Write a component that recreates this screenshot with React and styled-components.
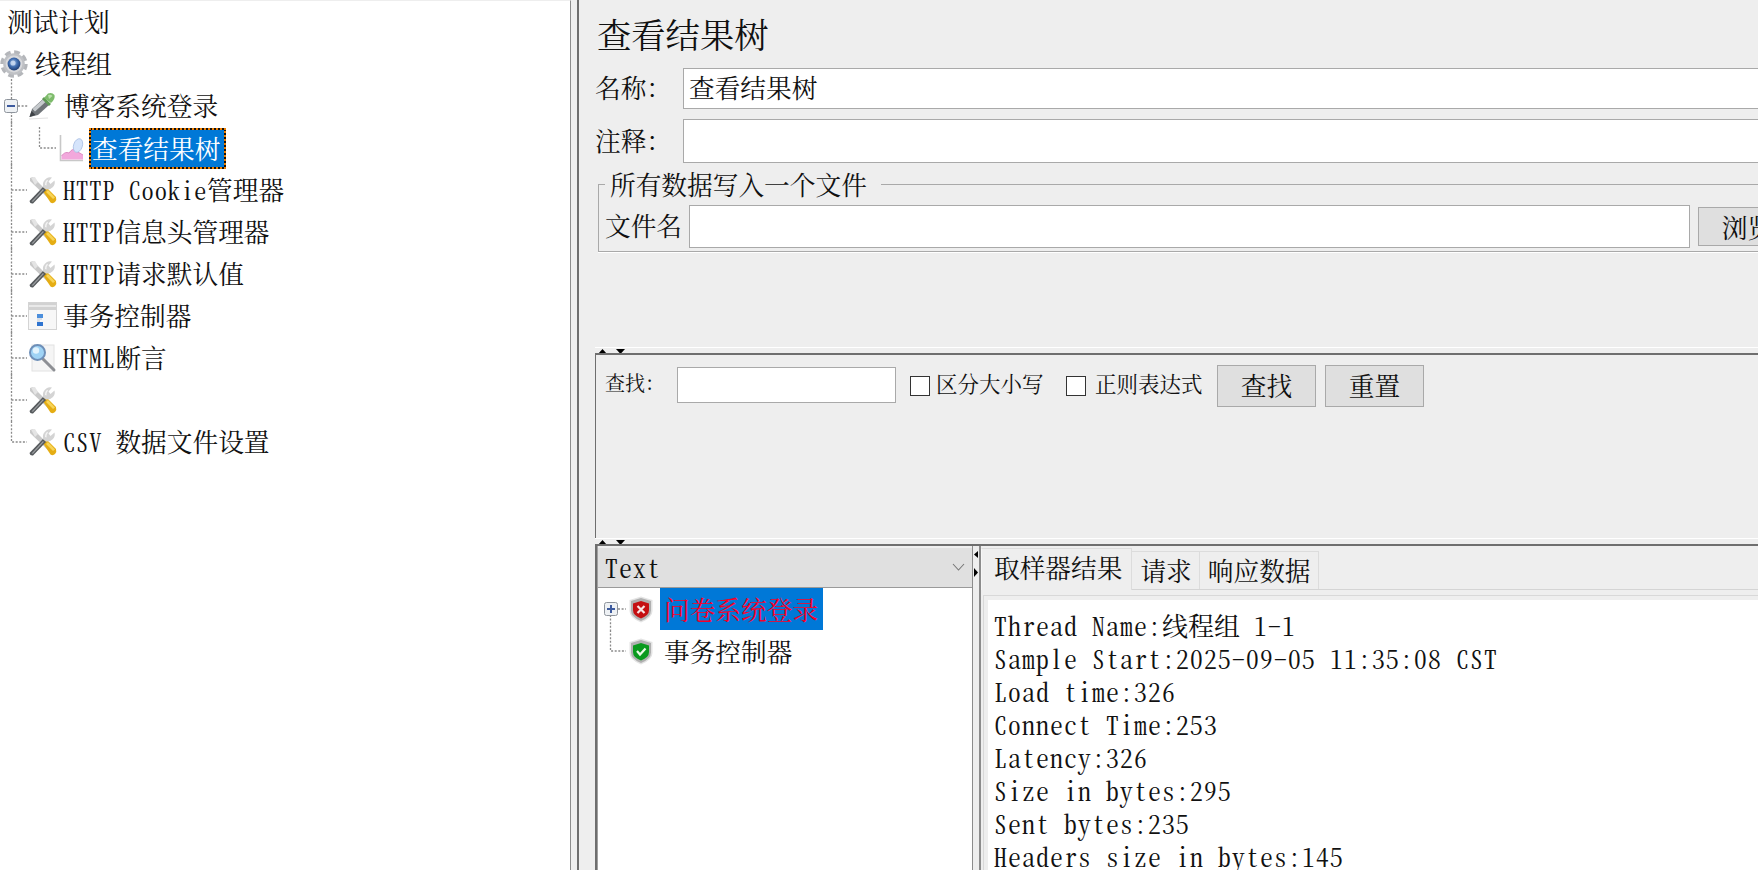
import React from "react";
import styled, { createGlobalStyle } from "styled-components";

const CJK = `"Noto Serif CJK SC", "Noto Sans CJK SC", "Liberation Serif", serif`;

const GlobalStyle = createGlobalStyle`
  html, body {
    margin: 0;
    height: 100%;
    overflow: hidden;
    background: #eeeeee;
  }
  #root { height: 100%; }
  * { box-sizing: border-box; }
`;

const Window = styled.div`
  display: flex;
  width: 1758px;
  height: 870px;
  overflow: hidden;
  font-family: ${CJK};
  color: #111;
`;

/* ---------- left tree ---------- */

const TreePane = styled.div`
  width: 571px;
  flex-shrink: 0;
  background: #fff;
  border-top: 1px solid #eeeeee;
  border-right: 1px solid #8c8c8c;
  font-size: 25.7px;
`;

const TreeRow = styled.div`
  display: flex;
  align-items: center;
  height: 42px;
  white-space: pre;
`;

/* half-width latin glyphs, the tree and result text is fixed pitch */
const Latin = styled.span`
  font-size: 24.5px;
  letter-spacing: 0.85px;
  font-feature-settings: "hwid";
`;

const TreeLabel = styled.span`
  margin-left: ${(p) => p.$gap ?? 6}px;
  margin-bottom: 2px;
  line-height: 1;
`;

const SelectedLabel = styled.span`
  display: flex;
  align-items: center;
  height: 41px;
  margin-left: 5px;
  padding: 0 4px 2px 1px;
  color: #fff;
  border: 2px dotted #f08000;
  background: linear-gradient(#0078d7, #0078d7) padding-box, #111 border-box;
`;

const Guide = styled.svg`
  flex-shrink: 0;
  overflow: visible;
  display: block;
`;

const Icon = styled.svg`
  flex-shrink: 0;
  display: block;
`;

const Gutter = styled.div`
  width: 6px;
  flex-shrink: 0;
  background: #eeeeee;
`;

/* ---------- right side ---------- */

const MainPane = styled.div`
  flex: 1;
  min-width: 0;
  overflow: hidden;
  background: #eeeeee;
  border-left: 2px solid #6e6e6e;
  display: flex;
  flex-direction: column;
`;

const Header = styled.div`
  height: 347px;
  flex-shrink: 0;
  width: 1400px;
  padding-left: 16px;
`;

const Title = styled.div`
  height: 68px;
  padding-left: 2px;
  font-size: 34.3px;
  line-height: 68px;
  white-space: nowrap;
`;

const FieldRow = styled.div`
  display: flex;
  align-items: center;
  height: ${(p) => p.$h}px;
  margin-bottom: ${(p) => p.$mb || 0}px;
`;

const FieldLabel = styled.label`
  width: ${(p) => p.$w}px;
  flex-shrink: 0;
  padding-bottom: 4px;
  font-size: ${(p) => p.$size || 25.7}px;
  white-space: nowrap;
`;

const TextBox = styled.div`
  flex: ${(p) => (p.$w ? "none" : 1)};
  width: ${(p) => (p.$w ? `${p.$w}px` : "auto")};
  height: ${(p) => (p.$h ? `${p.$h}px` : "100%")};
  margin-top: ${(p) => p.$mt || 0}px;
  display: flex;
  align-items: center;
  padding: 0 0 4px 5px;
  background: #fff;
  border: 1px solid #a9a9a9;
  font-size: 25.7px;
  white-space: nowrap;
`;

const FileGroup = styled.fieldset`
  margin: 8px 0 0 3px;
  padding: 8px 0 3px 6px;
  border: 1px solid #a9a9a9;
  border-right: 0;
  box-shadow: 0 1px 0 #fff;
  min-width: 0;
`;

const GroupTitle = styled.legend`
  margin-left: 0;
  padding: 0 14px 0 5px;
  font-size: 25.7px;
  line-height: 26px;
  white-space: nowrap;
`;

const Button = styled.button`
  flex-shrink: 0;
  width: 99px;
  height: ${(p) => p.$h || 42}px;
  margin: ${(p) => p.$m || 0};
  padding: 0 0 4px;
  background: #dfdfdf;
  border: 1px solid #a9a9a9;
  font-family: ${CJK};
  font-size: 25.7px;
  color: #111;
`;

const Splitter = styled.div`
  height: 6px;
  flex-shrink: 0;
  margin-left: 16px;
  border-top: 1px solid #fff;
  padding: 1px 0 0 3px;
  display: flex;
  gap: 9px;
`;

const SearchPanel = styled.div`
  height: 185px;
  flex-shrink: 0;
  margin-left: 16px;
  border-top: 2px solid #6e6e6e;
  border-left: 1px solid #6e6e6e;
  padding: 10px 0 0 9px;
`;

const SearchRow = styled.div`
  display: flex;
  align-items: center;
  height: 38px;
  white-space: nowrap;
`;

const Check = styled.span`
  width: 20px;
  height: 20px;
  flex-shrink: 0;
  margin: 4px 0 0 ${(p) => p.$ml}px;
  background: #fff;
  border: 1px solid #333;
`;

const CheckLabel = styled.span`
  margin: 0 ${(p) => p.$mr || 0}px 4px ${(p) => p.$ml}px;
  font-size: 21.5px;
  width: 105px;
  flex-shrink: 0;
`;

const Results = styled.div`
  flex: 1;
  min-height: 0;
  margin-left: 16px;
  display: flex;
  border-top: 2px solid #6e6e6e;
  border-left: 2px solid #6e6e6e;
`;

const SampleColumn = styled.div`
  width: 376px;
  flex-shrink: 0;
  padding-top: 2px;
  border-left: 1px solid #a0a0a0;
  border-right: 1px solid #8c8c8c;
  display: flex;
  flex-direction: column;
`;

const Combo = styled.div`
  height: 40px;
  flex-shrink: 0;
  display: flex;
  align-items: center;
  justify-content: space-between;
  padding: 0 7px 2px 7px;
  background: #e0e0e0;
  border-bottom: 1px solid #9a9a9a;
  font-size: 25.5px;
  letter-spacing: 1.25px;
  font-feature-settings: "hwid";
`;

const SampleList = styled.div`
  flex: 1;
  background: #fff;
  font-size: 25.7px;
`;

const SampleRow = styled.div`
  display: flex;
  align-items: center;
  height: 42px;
  white-space: nowrap;
`;

const SampleLabel = styled.span`
  display: flex;
  align-items: center;
  height: 42px;
  margin-left: 7px;
  padding: 0 5px 1px 4px;
  color: ${(p) => (p.$failed ? "#f4002a" : "#111")};
  background: ${(p) => (p.$failed ? "#0078d7" : "transparent")};
`;

const SplitGrip = styled.div`
  width: 6px;
  flex-shrink: 0;
  padding: 5px 0 0 1px;
  display: flex;
  flex-direction: column;
  gap: 10px;
`;

const DetailColumn = styled.div`
  flex: 1;
  min-width: 0;
  border-left: 2px solid #8c8c8c;
  padding-top: 2px;
  display: flex;
  flex-direction: column;
`;

const TabBar = styled.div`
  display: flex;
  align-items: flex-end;
  height: 42px;
  flex-shrink: 0;
  border-bottom: 1px solid #d4d4d4;
`;

const Tab = styled.div`
  height: ${(p) => (p.$active ? 42 : 38)}px;
  padding: ${(p) => (p.$active ? "0 9px 6px 12px" : "0 7px 2px 8px")};
  margin-bottom: ${(p) => (p.$active ? -1 : 0)}px;
  display: flex;
  align-items: center;
  font-size: 25.7px;
  white-space: nowrap;
  border: 1px solid #dcdcdc;
  border-left: ${(p) => (p.$active ? "1px solid #f6f6f6" : 0)};
  border-bottom: 0;
  background: #eeeeee;
`;

const DetailFrame = styled.div`
  flex: 1;
  min-height: 0;
  margin: 5px 0 0 2px;
  padding: 4px 0 0 4px;
  border-top: 1px solid #d8d8d8;
  border-left: 1px solid #d8d8d8;
`;

const DetailText = styled.div`
  height: 100%;
  background: #fff;
  padding: 8px 0 0 6px;
  font-size: 25.5px;
  letter-spacing: 1.25px;
  font-feature-settings: "hwid";
  line-height: 33px;
  white-space: pre;
`;

const DetailCjk = styled.span`
  font-size: 26px;
  letter-spacing: 0;
`;

/* ---------- drawings ---------- */

const Tri = ({ dir, w = 9, h = 5, color = "#000" }) => {
  const points = {
    up: `0,${h} ${w},${h} ${w / 2},0`,
    down: `0,0 ${w},0 ${w / 2},${h}`,
    left: `${w},0 ${w},${h} 0,${h / 2}`,
    right: `0,0 0,${h} ${w},${h / 2}`,
  }[dir];
  return (
    <Icon width={w} height={h} viewBox={`0 0 ${w} ${h}`}>
      <polygon points={points} fill={color} />
    </Icon>
  );
};

const Expander = ({ x, y, open }) => (
  <g>
    <rect x={x + 0.5} y={y + 0.5} width="13" height="13" rx="2" fill="#eef1f4" stroke="#8e949c" />
    <rect x={x + 3} y={y + 6} width="8" height="2" fill="#3c5a9e" />
    {!open && <rect x={x + 6} y={y + 3} width="2" height="8" fill="#3c5a9e" />}
  </g>
);

const TreeGuide = ({ width, d, children }) => (
  <Guide width={width} height="42" viewBox={`0 0 ${width} 42`}>
    <path d={d} fill="none" stroke="#8a8a8a" strokeWidth="1.3" strokeDasharray="2 1.6" />
    {children}
  </Guide>
);

const GearIcon = () => (
  <Icon width="28" height="28" viewBox="0 0 28 28">
    <defs>
      <radialGradient id="gearHub" cx="45%" cy="40%" r="60%">
        <stop offset="0" stopColor="#9fbce4" />
        <stop offset="0.55" stopColor="#3f6cae" />
        <stop offset="1" stopColor="#1f3d72" />
      </radialGradient>
    </defs>
    <circle cx="14" cy="14" r="11.5" fill="none" stroke="#b4b6ba" strokeWidth="4.4" strokeDasharray="5.5 3.5" />
    <circle cx="14" cy="14" r="10.8" fill="#bfc1c5" />
    <circle cx="14" cy="14" r="8.4" fill="#d8d9dc" />
    <circle cx="14" cy="14" r="6.4" fill="url(#gearHub)" />
    <circle cx="13" cy="13" r="2.6" fill="#d5e3f6" opacity="0.75" />
  </Icon>
);

const DropperIcon = () => (
  <Icon width="29" height="28" viewBox="0 0 29 28">
    <path d="M1 27 L20 26" stroke="#e2e2e2" strokeWidth="1" />
    <path d="M1.5 25 L4 17 L15 7 L21 13 L10 23 Z" fill="#6f7478" />
    <path d="M4.5 17 L15 7.5 L17.5 10 L7 19.5 Z" fill="#c6cacd" />
    <path d="M1.5 25 L3.5 19 L7.5 23 Z" fill="#3e4246" />
    <path d="M14 7 L21 14 L23 12 L16 5 Z" fill="#5f9a55" />
    <path d="M16 6 L20 1.5 Q24 0 26.5 3 Q27.5 7 23 11 Z" fill="#7dbb6b" />
    <path d="M20 3 Q23 2 24.5 4 L21 7 Z" fill="#b9e0ab" />
  </Icon>
);

const ToolsIcon = () => (
  <Icon width="29" height="28" viewBox="0 0 29 28">
    <path d="M2 2 L5 1 L26 22 L23 25 L2 5 Z" fill="#c9c9c9" />
    <path d="M3 1.5 L7 1 L10 6 L7 9 Z" fill="#e4e4e4" />
    <path d="M14.5 14.5 L18 11 L28 21 Q29 24 27 26 Q25 28 22.5 26.5 Z" fill="#e5ad13" />
    <path d="M20 14 L27 21.5 L25 23 L18 16 Z" fill="#f7d458" />
    <path d="M1.5 25 L15 11 L18 14 L5 27.5 Q2 28 1.5 25 Z" fill="#55595c" />
    <path d="M3.5 25.5 L15 13 L15.8 14 L5 25.8 Z" fill="#9a9da0" />
    <path d="M15 11 Q14 5 19 2 Q21 0.8 24 1.5 L20.5 5.5 L22.5 8 L26.5 4.5 Q27.5 8 25 11 Q22 14 18 13.5 Z" fill="#d4d4d4" />
    <path d="M17 9 Q16.5 6 19 3.8 L20 4.2 Q18 7 18.5 9.5 Z" fill="#f4f4f4" />
  </Icon>
);

const ChartIcon = () => (
  <Icon width="26" height="28" viewBox="0 0 26 28">
    <path d="M2.5 1 V26.5 H25" fill="none" stroke="#c8c8c8" strokeWidth="1.6" />
    <path d="M3.5 25.5 V22 Q7 17 11 19 Q15 13 18 17 Q22 19 25 21 V25.5 Z" fill="#f2a8dc" />
    <path d="M3.5 22 Q7 17 11 19 Q15 13 18 17 Q22 19 25 21" fill="none" stroke="#d77bb9" strokeWidth="0.8" />
    <ellipse cx="20" cy="11.5" rx="4.4" ry="7" transform="rotate(18 20 11.5)" fill="#d5e4fb" stroke="#aac0e4" strokeWidth="0.8" />
  </Icon>
);

const WindowIcon = () => (
  <Icon width="29" height="28" viewBox="0 0 29 28">
    <rect x="0.5" y="0.5" width="28" height="27" fill="#f7f7f7" stroke="#d4d4d4" />
    <rect x="1" y="1" width="27" height="7" fill="#d2d2d2" />
    <rect x="1" y="3" width="27" height="2" fill="#e9e9e9" />
    <rect x="9" y="12" width="6" height="4" fill="#4c8fdc" />
    <rect x="9" y="20" width="6" height="4" fill="#2f74d0" />
    <path d="M9 17 H14 M9 19 H12" stroke="#b9c6d8" />
  </Icon>
);

const LensIcon = () => (
  <Icon width="29" height="30" viewBox="0 0 29 30">
    <rect x="4" y="2" width="22" height="26" fill="#f5f5f5" stroke="#e2e2e2" />
    <path d="M15 16 L26 27" stroke="#8d8f94" strokeWidth="3" strokeLinecap="round" />
    <circle cx="9.5" cy="9.5" r="7.5" fill="#9fd3f5" stroke="#6e8fb8" strokeWidth="2" />
    <circle cx="8" cy="7.5" r="3.2" fill="#e2f3fd" />
  </Icon>
);

const ShieldIcon = ({ ok }) => (
  <Icon width="24" height="27" viewBox="0 0 24 27">
    <path d="M12 0.5 L23.5 4 V15 Q23.5 22 12 26.5 Q0.5 22 0.5 15 V4 Z" fill="#e4e4e4" />
    <path d="M12 2 L22 5 V14.5 Q22 21 12 25 Q2 21 2 14.5 V5 Z" fill="#b0b0b0" />
    <path d="M12 5 L20 7.5 V14 Q20 19.5 12 22.5 Q4 19.5 4 14 V7.5 Z" fill={ok ? "#0a9a1e" : "#c50f12"} />
    {ok ? (
      <path d="M8 13 L11 16.5 L16.5 10.5" fill="none" stroke="#eafbe6" strokeWidth="2.2" />
    ) : (
      <path d="M8.5 10 L15.5 17 M15.5 10 L8.5 17" stroke="#f8e4e4" strokeWidth="2.2" />
    )}
  </Icon>
);

const Chevron = () => (
  <Icon width="13" height="8" viewBox="0 0 13 8">
    <path d="M1 1 L6.5 7 L12 1" fill="none" stroke="#777" strokeWidth="1.1" />
  </Icon>
);

/* ---------- data ---------- */

const trunk = "M11.5 -6 V42";
const branch = `${trunk} M11.5 21 H27`;
const lastBranch = "M11.5 0 V21 H27";

const toolRows = [
  { icon: <ToolsIcon />, text: <><Latin>HTTP Cookie</Latin>管理器</> },
  { icon: <ToolsIcon />, text: <><Latin>HTTP</Latin>信息头管理器</> },
  { icon: <ToolsIcon />, text: <><Latin>HTTP</Latin>请求默认值</> },
  { icon: <WindowIcon />, text: "事务控制器" },
  { icon: <LensIcon />, text: <><Latin>HTML</Latin>断言</> },
  { icon: <ToolsIcon />, text: "" },
];

const detailLines = [
  <>Thread Name:<DetailCjk>线程组</DetailCjk> 1-1</>,
  "Sample Start:2025-09-05 11:35:08 CST",
  "Load time:326",
  "Connect Time:253",
  "Latency:326",
  "Size in bytes:295",
  "Sent bytes:235",
  "Headers size in bytes:145",
];

export default function App() {
  return (
    <Window>
      <GlobalStyle />
      <TreePane>
        <TreeRow>
          <TreeLabel $gap={7}>测试计划</TreeLabel>
        </TreeRow>
        <TreeRow>
          <GearIcon />
          <TreeLabel $gap={7}>线程组</TreeLabel>
        </TreeRow>
        <TreeRow>
          <TreeGuide width={28} d="M11.5 -6 V42 M18 21 H28">
            <Expander x={4} y={14} open />
          </TreeGuide>
          <DropperIcon />
          <TreeLabel $gap={7}>博客系统登录</TreeLabel>
        </TreeRow>
        <TreeRow>
          <TreeGuide width={58} d={`${trunk} M39.5 0 V21 H56`} />
          <ChartIcon />
          <SelectedLabel>查看结果树</SelectedLabel>
        </TreeRow>
        {toolRows.map((row, i) => (
          <TreeRow key={i}>
            <TreeGuide width={28} d={branch} />
            {row.icon}
            <TreeLabel>{row.text}</TreeLabel>
          </TreeRow>
        ))}
        <TreeRow>
          <TreeGuide width={28} d={lastBranch} />
          <ToolsIcon />
          <TreeLabel><Latin>CSV </Latin>数据文件设置</TreeLabel>
        </TreeRow>
      </TreePane>
      <Gutter />
      <MainPane>
        <Header>
          <Title>查看结果树</Title>
          <FieldRow $h={41} $mb={10}>
            <FieldLabel $w={88}>名称：</FieldLabel>
            <TextBox>查看结果树</TextBox>
          </FieldRow>
          <FieldRow $h={44}>
            <FieldLabel $w={88}>注释：</FieldLabel>
            <TextBox />
          </FieldRow>
          <FileGroup>
            <GroupTitle>所有数据写入一个文件</GroupTitle>
            <FieldRow $h={43}>
              <FieldLabel $w={84}>文件名</FieldLabel>
              <TextBox $w={1001} />
              <Button $h={39} $m="0 0 0 8px">浏览</Button>
            </FieldRow>
          </FileGroup>
        </Header>

        <Splitter>
          <Tri dir="up" />
          <Tri dir="down" />
        </Splitter>
        <SearchPanel>
          <SearchRow>
            <FieldLabel $w={72} $size={20}>查找：</FieldLabel>
            <TextBox $w={219} $h={36} $mt={2} />
            <Check $ml={14} />
            <CheckLabel $ml={6} $mr={2}>区分大小写</CheckLabel>
            <Check $ml={23} />
            <CheckLabel $ml={9}>正则表达式</CheckLabel>
            <Button $m="4px 0 0 17px">查找</Button>
            <Button $m="4px 0 0 9px">重置</Button>
          </SearchRow>
        </SearchPanel>
        <Splitter>
          <Tri dir="up" />
          <Tri dir="down" />
        </Splitter>

        <Results>
          <SampleColumn>
            <Combo>
              Text
              <Chevron />
            </Combo>
            <SampleList>
              <SampleRow>
                <TreeGuide width={31} d="M12.5 27 V42 M20 21 H28">
                  <Expander x={6} y={14} />
                </TreeGuide>
                <ShieldIcon />
                <SampleLabel $failed>问卷系统登录</SampleLabel>
              </SampleRow>
              <SampleRow>
                <TreeGuide width={31} d="M12.5 0 V21 H28" />
                <ShieldIcon ok />
                <SampleLabel>事务控制器</SampleLabel>
              </SampleRow>
            </SampleList>
          </SampleColumn>
          <SplitGrip>
            <Tri dir="left" w={4} h={7} />
            <Tri dir="right" w={4} h={9} />
          </SplitGrip>
          <DetailColumn>
            <TabBar>
              <Tab $active>取样器结果</Tab>
              <Tab>请求</Tab>
              <Tab>响应数据</Tab>
            </TabBar>
            <DetailFrame>
              <DetailText>
                {detailLines.map((line, i) => (
                  <div key={i}>{line}</div>
                ))}
              </DetailText>
            </DetailFrame>
          </DetailColumn>
        </Results>
      </MainPane>
    </Window>
  );
}
